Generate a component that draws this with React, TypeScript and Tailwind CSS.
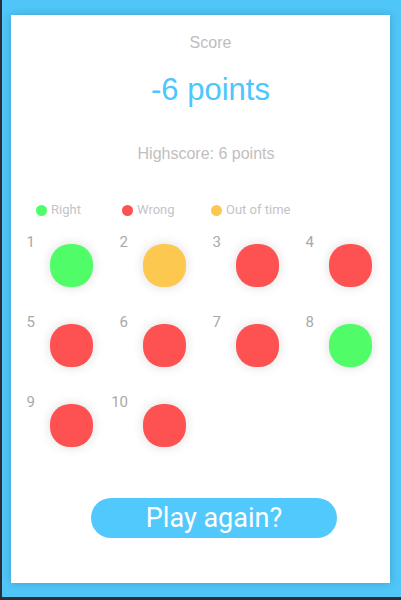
const results: Array<"right" | "wrong" | "time"> = [
  "right", "time", "wrong", "wrong",
  "wrong", "wrong", "wrong", "right",
  "wrong", "wrong",
]

const dotColor = {
  right: "bg-[#50fd68]",
  wrong: "bg-[#fe5151]",
  time: "bg-[#fcc850]",
}

function Legend() {
  return (
    <div className="flex h-[20px] items-center pl-[25px] text-[13px] text-[#c4c4c4] font-['Roboto',sans-serif]">
      <div className="flex w-[86px] items-center gap-[4px]">
        <span className="h-[11px] w-[11px] rounded-full bg-[#50fd68]" />
        <span>Right</span>
      </div>
      <div className="flex w-[89px] items-center gap-[4px]">
        <span className="h-[11px] w-[11px] rounded-full bg-[#fe5151]" />
        <span>Wrong</span>
      </div>
      <div className="flex items-center gap-[4px]">
        <span className="h-[11px] w-[11px] rounded-full bg-[#fcc850]" />
        <span>Out of time</span>
      </div>
    </div>
  )
}

export default function App() {
  return (
    <div className="h-[600px] w-full border-b-[3px] border-l-2 border-[#2d2c38] bg-[#4fc5f8] pl-[9px] pt-[15px]">
      <div className="flex h-[568px] w-[379px] flex-col bg-white shadow-[0_0_8px_rgba(0,0,0,0.18)]">
        <div className="mt-[20px] pl-[20px] text-center font-['Liberation_Sans',Arial,sans-serif] text-[16px] leading-none text-[#bdbdbd]">
          Score
        </div>
        <div className="mt-[23px] pl-[20px] text-center font-['Liberation_Sans',Arial,sans-serif] text-[31px] leading-none text-[#4cc6fb]">
          -6 points
        </div>
        <div className="mt-[41px] pl-[11px] text-center font-['Liberation_Sans',Arial,sans-serif] text-[16px] leading-none text-[#c2bebe]">
          Highscore: 6 points
        </div>

        <div className="mt-[38px]">
          <Legend />
        </div>

        <div className="mt-[15px] grid grid-cols-[repeat(4,93px)] gap-y-[28px] pl-[4px] font-['Roboto',sans-serif]">
          {results.map((r, i) => (
            <div key={i} className="flex">
              <div className="w-[20px] text-right text-[15px] leading-none text-[#a9a9a9]">{i + 1}</div>
              <div className={`ml-[15px] mt-[9px] h-[43px] w-[43px] rounded-[20px] shadow-[0_0_12px_rgba(0,0,0,0.14)] ${dotColor[r]}`} />
            </div>
          ))}
        </div>

        <button className="ml-[80px] mt-[51px] h-[40px] w-[246px] rounded-full bg-[#52c9fd] font-['Roboto',sans-serif] text-[27px] leading-none text-white">
          Play again?
        </button>
      </div>
    </div>
  )
}
